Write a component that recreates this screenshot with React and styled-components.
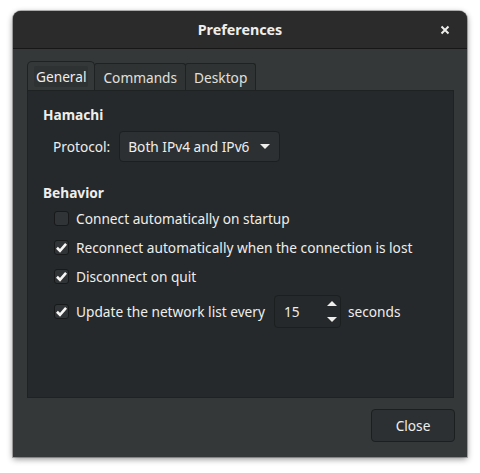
import React, { useState } from "react";
import styled, { createGlobalStyle } from "styled-components";

const Global = createGlobalStyle`
  html, body {
    margin: 0;
    background: #ffffff;
  }
  body {
    font-family: "Noto Sans", "DejaVu Sans", sans-serif;
    font-size: 13.7px;
    color: #eeeeec;
  }
`;

const Page = styled.div`
  width: 480px;
  height: 473px;
  padding: 11px 13px 16px 13px;
  box-sizing: border-box;
`;

const Window = styled.div`
  height: 100%;
  background: #353839;
  border-radius: 8px 8px 0 0;
  box-shadow: 0 2px 6px rgba(0, 0, 0, 0.45), 0 0 0 1px rgba(0, 0, 0, 0.25);
  display: flex;
  flex-direction: column;
  overflow: hidden;
`;

const HeaderBar = styled.div`
  height: 37px;
  flex: none;
  background: #2b2b2b;
  border-bottom: 1px solid #171717;
  display: grid;
  grid-template-columns: 1fr auto 1fr;
  align-items: center;
`;

const Title = styled.div`
  grid-column: 2;
  font-weight: bold;
  font-size: 14.3px;
  color: #eeeeec;
`;

const CloseX = styled.button`
  grid-column: 3;
  justify-self: end;
  margin-right: 10px;
  width: 24px;
  height: 24px;
  border: none;
  background: transparent;
  color: #eeeeec;
  display: flex;
  align-items: center;
  justify-content: center;
  padding: 0;
`;

const Body = styled.div`
  flex: 1;
  display: flex;
  flex-direction: column;
  padding: 12px 13px 15px 14px;
  min-height: 0;
`;

const Tabs = styled.div`
  display: flex;
  align-items: flex-end;
  height: 29px;
`;

const Tab = styled.div`
  height: ${(p) => (p.$active ? "29px" : "27px")};
  box-sizing: border-box;
  padding: 0 6px;
  display: flex;
  align-items: center;
  background: ${(p) => (p.$active ? "#353839" : "#303334")};
  border: 1px solid #1f2223;
  border-bottom: none;
  border-radius: ${(p) => (p.$active ? "5px 5px 0 0" : "3px 3px 0 0")};
  margin-right: -1px;
  color: ${(p) => (p.$active ? "#eeeeec" : "#e0e0de")};
`;

const TabLabel = styled.span`
  padding: 1px 2px;
  background: ${(p) => (p.$active ? "#2f3233" : "transparent")};
  border-radius: 2px;
`;

const Panel = styled.div`
  flex: 1;
  background: #25292b;
  border: 1px solid #1f2223;
  padding: 14px 15px 13px;
  display: flex;
  flex-direction: column;
`;

const Heading = styled.div`
  font-weight: bold;
  line-height: 20px;
`;

const Indented = styled.div`
  padding-left: 10px;
  display: flex;
  flex-direction: column;
  margin-top: ${(p) => p.$top || 0}px;
`;

const ProtocolRow = styled.div`
  display: flex;
  align-items: center;
  gap: 9px;
  margin: 6px 0 21px 0;
`;

const Combo = styled.div`
  width: 161px;
  height: 31px;
  box-sizing: border-box;
  background: #2d3032;
  border: 1px solid #1c1f20;
  border-radius: 4px;
  display: flex;
  align-items: center;
  justify-content: space-between;
  padding: 0 9px 0 8px;
`;

const CheckRow = styled.label`
  display: flex;
  align-items: center;
  gap: 7px;
  height: ${(p) => p.$h || 29}px;
  margin-left: 1px;
`;

const Box = styled.span`
  width: 15px;
  height: 15px;
  box-sizing: border-box;
  border-radius: 3px;
  background: #303436;
  border: 1px solid #17191a;
  display: flex;
  align-items: center;
  justify-content: center;
  flex: none;
`;

const Spin = styled.div`
  width: 67px;
  height: 33px;
  box-sizing: border-box;
  border: 1px solid #1c1f20;
  border-radius: 4px;
  background: #25292b;
  display: flex;
  margin-left: 2px;
`;

const SpinValue = styled.div`
  flex: 1;
  display: flex;
  align-items: center;
  padding-left: 9px;
`;

const SpinArrows = styled.div`
  width: 15px;
  display: flex;
  flex-direction: column;
  justify-content: space-between;
  align-items: center;
  padding: 4px 0;
`;

const Footer = styled.div`
  display: flex;
  justify-content: flex-end;
  padding-top: 11px;
`;

const Button = styled.button`
  width: 84px;
  height: 33px;
  box-sizing: border-box;
  background: #2d3032;
  border: 1px solid #1c1f20;
  border-radius: 4px;
  color: #eeeeec;
  font-family: inherit;
  font-size: 13.7px;
  margin-right: -1px;
`;

function Check({ checked }) {
  return (
    <Box>
      {checked && (
        <svg width="13" height="13" viewBox="0 0 12 12">
          <path d="M1.8 6.2 L4.6 9 L10.2 2.6" fill="none" stroke="#f6f6f4" strokeWidth="2.4" />
        </svg>
      )}
    </Box>
  );
}

export default function App() {
  const [opts] = useState([
    { label: "Connect automatically on startup", checked: false },
    { label: "Reconnect automatically when the connection is lost", checked: true },
    { label: "Disconnect on quit", checked: true },
  ]);

  return (
    <Page>
      <Global />
      <Window>
        <HeaderBar>
          <Title>Preferences</Title>
          <CloseX>
            <svg width="10" height="10" viewBox="0 0 10 10">
              <path d="M1.5 1.5 L8.5 8.5 M8.5 1.5 L1.5 8.5" stroke="#eeeeec" strokeWidth="2" />
            </svg>
          </CloseX>
        </HeaderBar>
        <Body>
          <Tabs>
            <Tab $active>
              <TabLabel $active>General</TabLabel>
            </Tab>
            <Tab>
              <TabLabel>Commands</TabLabel>
            </Tab>
            <Tab>
              <TabLabel>Desktop</TabLabel>
            </Tab>
          </Tabs>
          <Panel>
            <Heading>Hamachi</Heading>
            <Indented>
              <ProtocolRow>
                <span>Protocol:</span>
                <Combo>
                  <span>Both IPv4 and IPv6</span>
                  <svg width="10" height="6" viewBox="0 0 10 6">
                    <path d="M0 0 L10 0 L5 5 Z" fill="#eeeeec" />
                  </svg>
                </Combo>
              </ProtocolRow>
            </Indented>
            <Heading>Behavior</Heading>
            <Indented $top={1}>
              {opts.map((o) => (
                <CheckRow key={o.label}>
                  <Check checked={o.checked} />
                  <span>{o.label}</span>
                </CheckRow>
              ))}
              <CheckRow $h={41}>
                <Check checked />
                <span>Update the network list every</span>
                <Spin>
                  <SpinValue>15</SpinValue>
                  <SpinArrows>
                    <svg width="10" height="6" viewBox="0 0 10 6">
                      <path d="M0 6 L10 6 L5 1 Z" fill="#eeeeec" />
                    </svg>
                    <svg width="10" height="6" viewBox="0 0 10 6">
                      <path d="M0 0 L10 0 L5 5 Z" fill="#eeeeec" />
                    </svg>
                  </SpinArrows>
                </Spin>
                <span>seconds</span>
              </CheckRow>
            </Indented>
          </Panel>
          <Footer>
            <Button>Close</Button>
          </Footer>
        </Body>
      </Window>
    </Page>
  );
}
